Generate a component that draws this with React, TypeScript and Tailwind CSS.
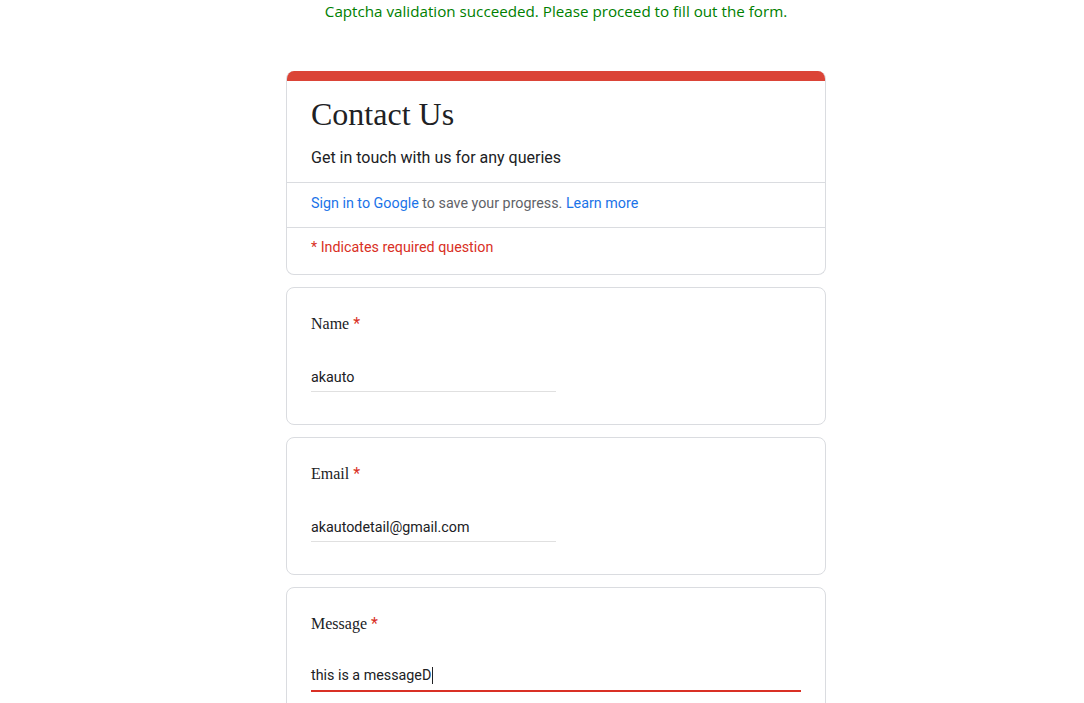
import React from "react";

const roboto = { fontFamily: "Roboto, 'Liberation Sans', sans-serif" };
const serif = { fontFamily: "'Liberation Serif', 'Times New Roman', serif" };

const Question = ({
  label,
  value,
  active,
}: {
  label: string;
  value: string;
  active?: boolean;
}) => (
  <div className="rounded-lg border border-[#dadce0] bg-white px-6 pt-6 pb-8">
    <div className="text-base leading-6 text-[#202124]" style={serif}>
      {label} <span className="text-[#d93025]" style={roboto}>*</span>
    </div>
    {active ? (
      <div className="mt-[29px] border-b-2 border-[#d93025] pb-[5px]">
        <div
          className="flex items-center text-[14.3px] leading-5 text-[#202124]"
          style={roboto}
        >
          {value}
          <span className="ml-px inline-block h-[17px] w-px bg-[#202124]" />
        </div>
      </div>
    ) : (
      <div className="mt-[31px] w-[245px] border-b border-[#e0e0e0] pb-[4px]">
        <div className="text-[14.3px] leading-5 text-[#202124]" style={roboto}>
          {value}
        </div>
      </div>
    )}
  </div>
);

export default function App() {
  return (
    <div className="min-h-screen bg-white pl-[28px]">
      <p
        className="text-center text-[15.2px] leading-[22px] text-[#008000]"
        style={{ fontFamily: "'Open Sans', 'Noto Sans', sans-serif" }}
      >
        Captcha validation succeeded. Please proceed to fill out the form.
      </p>

      <div className="mx-auto mt-[49px] flex w-[540px] flex-col gap-3">
        {/* Header card */}
        <div className="overflow-hidden rounded-lg border border-t-0 border-[#dadce0] bg-white">
          <div className="h-[10px] bg-[#db4437]" />
          <div className="px-6 pt-[13px] pb-[12px]">
            <h1 className="text-[32px] leading-10 text-[#202124]" style={serif}>
              Contact Us
            </h1>
            <p className="mt-[12px] text-base leading-6 text-[#202124]" style={roboto}>
              Get in touch with us for any queries
            </p>
          </div>
          <div
            className="border-t border-[#dadce0] px-6 pt-[10px] pb-[14px] text-[14.3px] leading-5 text-[#5f6368]"
            style={roboto}
          >
            <span className="text-[#1a73e8]">Sign in to Google</span> to save
            your progress. <span className="text-[#1a73e8]">Learn more</span>
          </div>
          <div
            className="border-t border-[#dadce0] px-6 pt-[9px] pb-[17px] text-[14.3px] leading-5 text-[#d93025]"
            style={roboto}
          >
            * Indicates required question
          </div>
        </div>

        <Question label="Name" value="akauto" />
        <Question label="Email" value="akautodetail@gmail.com" />
        <Question label="Message" value="this is a messageD" active />
      </div>
    </div>
  );
}
